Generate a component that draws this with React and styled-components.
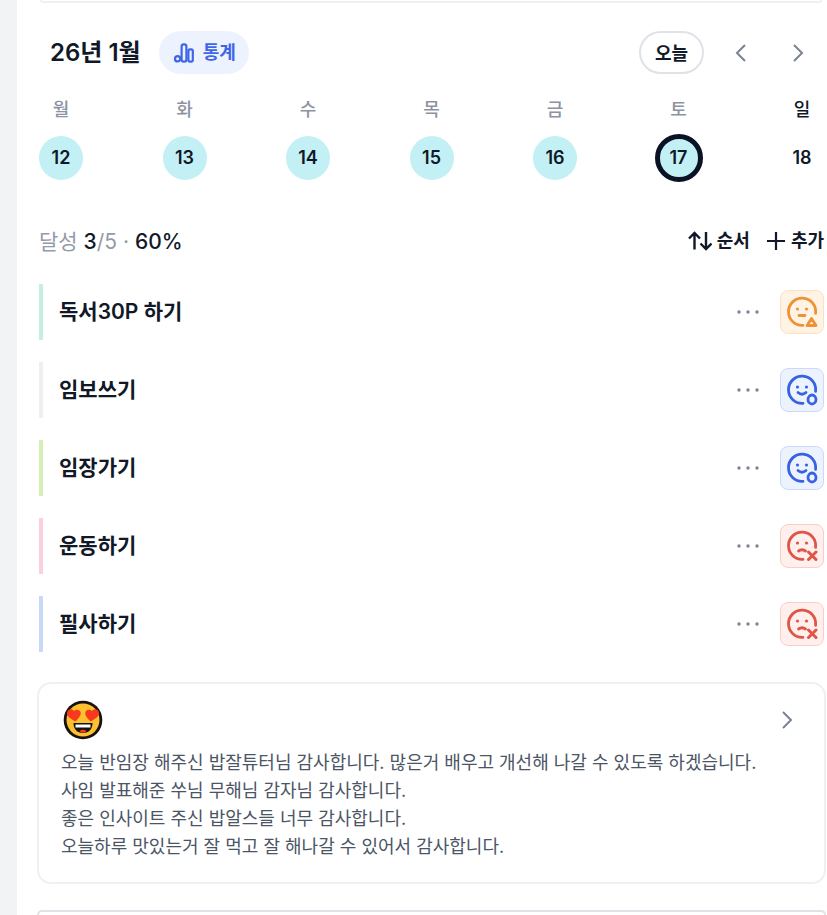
import React, { useState } from "react";
import styled, { createGlobalStyle } from "styled-components";

const GlobalStyle = createGlobalStyle`
  * {
    box-sizing: border-box;
  }

  body {
    margin: 0;
    background: #f1f3f5;
    color: #111827;
    font-family: Inter, "Noto Sans CJK KR", sans-serif;
  }

  button {
    padding: 0;
    border: 0;
    background: none;
    color: inherit;
    font: inherit;
    cursor: pointer;
  }
`;

const days = [
  { label: "월", date: 12, done: true },
  { label: "화", date: 13, done: true },
  { label: "수", date: 14, done: true },
  { label: "목", date: 15, done: true },
  { label: "금", date: 16, done: true },
  { label: "토", date: 17, done: true },
  { label: "일", date: 18, done: false, today: true }
];

const habits = [
  { title: "독서30P 하기", bar: "#c3eee0", status: "partial" },
  { title: "임보쓰기", bar: "#eeeff1", status: "done" },
  { title: "임장가기", bar: "#d5efb5", status: "done" },
  { title: "운동하기", bar: "#fbd0dc", status: "missed" },
  { title: "필사하기", bar: "#c9d8f6", status: "missed" }
];

const diary = [
  "오늘 반임장 해주신 밥잘튜터님 감사합니다. 많은거 배우고 개선해 나갈 수 있도록 하겠습니다.",
  "사임 발표해준 쑤님 무해님 감자님 감사합니다.",
  "좋은 인사이트 주신 밥알스들 너무 감사합니다.",
  "오늘하루 맛있는거 잘 먹고 잘 해나갈 수 있어서 감사합니다."
];

const statusColors = {
  partial: { main: "#ee9234", back: "#fff3e6", border: "#fde0c0", label: "부분 달성" },
  done: { main: "#3662e3", back: "#edf2ff", border: "#ccd9fb", label: "달성" },
  missed: { main: "#df5546", back: "#ffefed", border: "#fbcdc8", label: "미달성" }
};

const Page = styled.div`
  min-height: 100vh;
  padding-left: 17px;
  display: flex;
`;

const Panel = styled.main`
  flex: 1;
  min-width: 0;
  display: flex;
  flex-direction: column;
  padding: 0 1px 0 20px;
  background: #fff;
`;

const CardEnd = styled.div`
  height: 3px;
  margin: 0 4px 0 3px;
  border: 2px solid #eff0f2;
  border-top: 0;
  border-radius: 0 0 8px 8px;
`;

const Toolbar = styled.header`
  display: flex;
  align-items: center;
  margin-top: 28px;
  padding: 0 16px 0 13px;
`;

const Month = styled.h1`
  margin: 0 18px 0 0;
  font-size: 24px;
  font-weight: 600;
  line-height: 32px;
`;

const StatsButton = styled.button`
  display: flex;
  align-items: center;
  gap: 9px;
  height: 43px;
  padding: 0 13px 0 15px;
  border-radius: 22px;
  background: #edf2ff;
  color: #3f66e8;
  font-size: 18px;
  font-weight: 600;
  line-height: 28px;
`;

const TodayButton = styled.button`
  height: 43px;
  margin-left: auto;
  padding: 0 14px 2px;
  border: 2px solid #dfe2e7;
  border-radius: 22px;
  font-size: 18px;
  font-weight: 600;
`;

const ArrowButton = styled.button`
  display: grid;
  place-items: center;
  width: 24px;
  height: 32px;
  margin-left: ${(props) => props.$gap}px;
  color: #7a8294;
`;

const Week = styled.div`
  display: flex;
  justify-content: space-between;
  margin-top: 22px;
  padding: 0 2px;
`;

const DayColumn = styled.div`
  display: flex;
  flex-direction: column;
  align-items: center;
  gap: 12px;
  width: 44px;
`;

const DayLabel = styled.span`
  color: ${(props) => (props.$today ? "#111827" : "#8c93a1")};
  font-size: 18px;
  font-weight: 500;
  line-height: 28px;
`;

const DayButton = styled.button`
  width: ${(props) => (props.$selected ? 48 : 44)}px;
  height: ${(props) => (props.$selected ? 48 : 44)}px;
  margin: ${(props) => (props.$selected ? -2 : 0)}px;
  padding-bottom: 2px;
  border: ${(props) => (props.$selected ? "5px solid #0b1226" : "0")};
  border-radius: 50%;
  background: ${(props) => (props.$done ? "#c3f0f5" : "transparent")};
  font-size: 18px;
  font-weight: 600;
`;

const Summary = styled.div`
  display: flex;
  align-items: center;
  justify-content: space-between;
  margin-top: 46px;
  padding: 0 2px;
`;

const Progress = styled.p`
  margin: 0;
  color: #949ba8;
  font-size: 21px;
  line-height: 32px;

  strong {
    color: #111827;
    font-weight: 500;
  }
`;

const Actions = styled.div`
  display: flex;
  gap: 16px;
`;

const ActionButton = styled.button`
  display: flex;
  align-items: center;
  gap: 5px;
  padding-bottom: 2px;
  font-size: 18px;
  font-weight: 600;
  line-height: 28px;
`;

const HabitList = styled.ul`
  display: grid;
  gap: 22px;
  margin: 26px 0 0;
  padding: 0 2px;
  list-style: none;
`;

const HabitRow = styled.li`
  display: flex;
  align-items: center;
  height: 56px;
  padding-left: 16px;
  border-left: 4px solid ${(props) => props.$bar};
`;

const HabitTitle = styled.h2`
  flex: 1;
  margin: 0;
  font-size: 21px;
  font-weight: 600;
  line-height: 28px;
`;

const MoreButton = styled.button`
  display: grid;
  place-items: center;
  width: 24px;
  height: 32px;
  margin-right: 20px;
  color: #7d8492;
`;

const StatusButton = styled.button`
  display: grid;
  place-items: center;
  width: 44px;
  height: 44px;
  border: 1px solid ${(props) => statusColors[props.$status].border};
  border-radius: 8px;
  background: ${(props) => statusColors[props.$status].back};
  color: ${(props) => statusColors[props.$status].main};
`;

const DiaryCard = styled.article`
  margin-top: 30px;
  padding: 16px 22px 21px;
  border: 2px solid #eff0f2;
  border-radius: 14px;
`;

const DiaryHead = styled.div`
  display: flex;
  align-items: center;
  justify-content: space-between;
  padding: 0 3px 0 2px;
`;

const DiaryText = styled.p`
  margin: 9px 0 0;
  color: #4b5565;
  font-size: 18px;
  line-height: 28px;
`;

const NextCard = styled.div`
  flex: 1;
  min-height: 4px;
  margin-top: 26px;
  border: 2px solid #dfe2e7;
  border-bottom: 0;
  border-radius: 8px 8px 0 0;
`;

function ChartIcon() {
  return (
    <svg width="20" height="20" viewBox="0 0 20 20" fill="none" stroke="currentColor" strokeWidth="2.2">
      <circle cx="3.6" cy="15.8" r="2.6" />
      <rect x="7.6" y="1.4" width="4.8" height="17.2" rx="2.2" />
      <rect x="14.4" y="6.4" width="4.4" height="12.2" rx="1.6" />
    </svg>
  );
}

function Chevron({ left }) {
  return (
    <svg width="12" height="20" viewBox="0 0 12 20" fill="none" stroke="currentColor" strokeWidth="2">
      <path d={left ? "M10 2 2 10l8 8" : "m2 2 8 8-8 8"} />
    </svg>
  );
}

function OrderIcon() {
  return (
    <svg width="24" height="20" viewBox="0 0 24 20" fill="none" stroke="currentColor" strokeWidth="2.4">
      <path d="M6.5 18.5V2M1 7.5 6.5 2 12 7.5M18 1v17M12.5 12.5 18 18l5.5-5.5" />
    </svg>
  );
}

function PlusIcon() {
  return (
    <svg width="20" height="20" viewBox="0 0 20 20" fill="none" stroke="currentColor" strokeWidth="2.2">
      <path d="M10 1v18M1 10h18" />
    </svg>
  );
}

function DotsIcon() {
  return (
    <svg width="24" height="6" viewBox="0 0 24 6" fill="currentColor">
      <circle cx="3" cy="3" r="1.7" />
      <circle cx="12" cy="3" r="1.7" />
      <circle cx="21" cy="3" r="1.7" />
    </svg>
  );
}

function StatusIcon({ status }) {
  return (
    <svg
      width="32"
      height="32"
      viewBox="0 0 32 32"
      fill="none"
      stroke="currentColor"
      strokeWidth="2.8"
      strokeLinecap="round"
      strokeLinejoin="round"
    >
      <path d="M17 29.3A13.600 13.600 0 1 1 29.600 17.300" />
      <circle cx="11.5" cy="13" r="1.6" fill="currentColor" stroke="none" />
      <circle cx="20.5" cy="13" r="1.6" fill="currentColor" stroke="none" />
      {status === "partial" && (
        <>
          <path d="M13 19.500h6" />
          <path d="m25.500 22.500-4.500 7h9z" />
        </>
      )}
      {status === "done" && (
        <>
          <path d="M12 18.500q4 3.500 8 0" />
          <ellipse cx="26" cy="25.500" rx="4" ry="4.500" />
        </>
      )}
      {status === "missed" && (
        <>
          <path d="M12.500 21q3.500-2.500 7 0" />
          <path d="m22.500 22 7.500 7.500m0-7.500-7.500 7.500" strokeWidth="3" />
        </>
      )}
    </svg>
  );
}

function HeartEyes() {
  return (
    <svg width="40" height="40" viewBox="0 0 40 40" role="img" aria-label="행복해요">
      <circle cx="20" cy="20" r="19.300" fill="#17110f" />
      <circle cx="20" cy="20" r="16.500" fill="#fdc02f" />
      <path d="M12.500 21.500C7 18.500 3.500 16 4 12.500c.5-3.500 5-4.500 7-1.500 2.500-2.800 7-1 6.800 2.500-.2 3-2.800 5-5.300 8z" fill="#f8391b" />
      <path d="M27.500 21.500c5.500-3 9-5.500 8.500-9-.5-3.500-5-4.500-7-1.500-2.500-2.800-7-1-6.800 2.500.2 3 2.800 5 5.300 8z" fill="#f8391b" />
      <path d="M10.500 23h19c0 6-3.500 10-9.500 10s-9.500-4-9.500-10z" fill="#17110f" />
      <path d="M12.500 24.500h15v3h-15z" fill="#fff" />
      <path d="M16.500 31q3.500-2.500 7 0-1 1.800-3.500 1.800T16.500 31z" fill="#f8391b" />
    </svg>
  );
}

function Habit({ habit }) {
  return (
    <HabitRow $bar={habit.bar}>
      <HabitTitle>{habit.title}</HabitTitle>
      <MoreButton aria-label={`${habit.title} 더보기`}>
        <DotsIcon />
      </MoreButton>
      <StatusButton
        $status={habit.status}
        aria-label={`${habit.title} ${statusColors[habit.status].label}`}
      >
        <StatusIcon status={habit.status} />
      </StatusButton>
    </HabitRow>
  );
}

export default function App() {
  const [selected, setSelected] = useState(17);

  return (
    <>
      <GlobalStyle />
      <Page>
        <Panel>
          <CardEnd />
          <Toolbar>
            <Month>26년 1월</Month>
            <StatsButton>
              <ChartIcon />
              통계
            </StatsButton>
            <TodayButton>오늘</TodayButton>
            <ArrowButton $gap={25} aria-label="이전 주">
              <Chevron left />
            </ArrowButton>
            <ArrowButton $gap={33} aria-label="다음 주">
              <Chevron />
            </ArrowButton>
          </Toolbar>
          <Week>
            {days.map((day) => (
              <DayColumn key={day.date}>
                <DayLabel $today={day.today}>{day.label}</DayLabel>
                <DayButton
                  $done={day.done}
                  $selected={day.date === selected}
                  onClick={() => setSelected(day.date)}
                >
                  {day.date}
                </DayButton>
              </DayColumn>
            ))}
          </Week>
          <Summary>
            <Progress>
              달성 <strong>3</strong>/5 · <strong>60%</strong>
            </Progress>
            <Actions>
              <ActionButton>
                <OrderIcon />
                순서
              </ActionButton>
              <ActionButton>
                <PlusIcon />
                추가
              </ActionButton>
            </Actions>
          </Summary>
          <HabitList>
            {habits.map((habit) => (
              <Habit habit={habit} key={habit.title} />
            ))}
          </HabitList>
          <DiaryCard>
            <DiaryHead>
              <HeartEyes />
              <ArrowButton $gap={0} aria-label="일기 보기">
                <Chevron />
              </ArrowButton>
            </DiaryHead>
            <DiaryText>
              {diary.map((line) => (
                <React.Fragment key={line}>
                  {line}
                  <br />
                </React.Fragment>
              ))}
            </DiaryText>
          </DiaryCard>
          <NextCard />
        </Panel>
      </Page>
    </>
  );
}
